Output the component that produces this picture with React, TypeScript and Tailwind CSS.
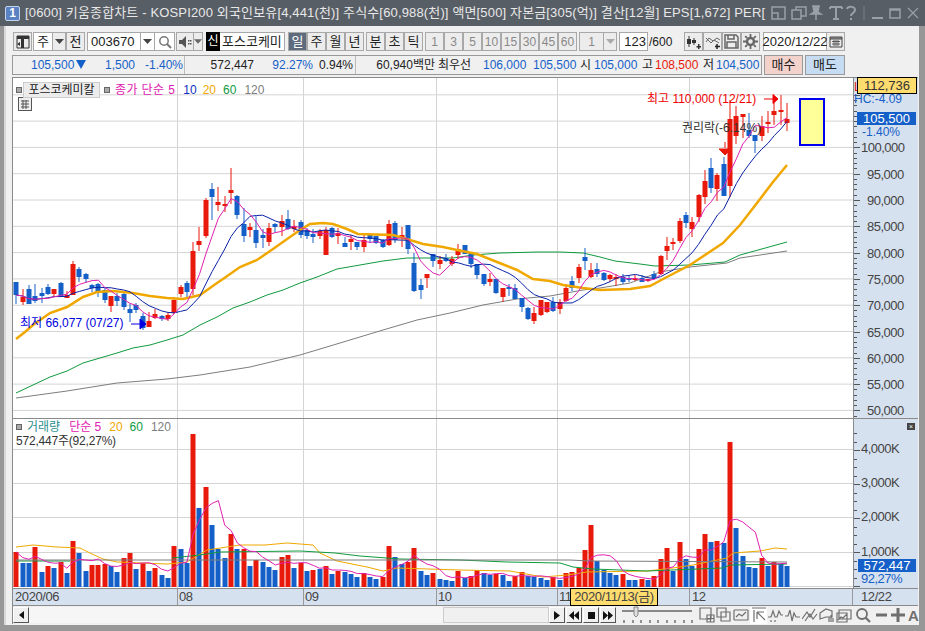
import React from "react"

const FONT = '"Liberation Sans","Noto Sans CJK KR",sans-serif'

// top, bottom, wick top, wick bottom, red
const candles: number[][] = [
  [282,295,282,304,0],[297,302,289,305,1],[289,304,285,304,0],[296,301,284,303,0],[293,296,288,303,0],
  [287,294,284,295,0],[289,294,289,297,1],[283,297,282,297,0],[295,298,291,298,1],[264,295,261,295,1],
  [269,277,267,282,0],[274,279,273,283,0],[285,288,284,292,0],[284,293,283,297,0],[290,300,288,303,0],
  [296,306,296,312,1],[296,301,293,306,0],[294,307,293,310,0],[309,313,304,322,0],[305,310,303,313,0],
  [316,328,313,330,0],[321,327,312,327,1],[314,318,309,319,1],[316,319,315,321,0],[315,319,312,321,1],
  [300,313,297,314,1],[287,294,285,297,1],[283,292,281,297,0],[251,289,242,295,1],[241,245,227,251,1],
  [200,236,198,238,1],[189,197,183,220,0],[202,205,187,211,1],[204,206,196,212,1],[190,193,168,204,1],
  [196,215,195,219,0],[224,236,208,242,0],[227,230,223,237,1],[230,243,216,248,0],[235,238,229,248,0],
  [228,242,223,246,1],[224,227,223,233,0],[221,227,215,236,1],[219,229,210,230,0],[226,229,220,232,1],
  [222,235,220,238,0],[230,236,228,239,0],[234,237,229,243,0],[231,236,229,239,1],[230,255,227,255,1],
  [228,237,227,238,0],[233,236,228,244,1],[243,247,237,247,0],[239,242,235,250,1],[242,247,242,250,0],
  [240,247,234,252,1],[234,239,234,243,0],[236,243,236,244,0],[240,247,239,248,0],[224,245,220,246,1],
  [223,240,221,243,0],[235,238,227,247,1],[225,249,225,254,0],[263,291,253,292,0],[285,290,279,299,0],
  [274,278,274,288,1],[254,261,254,267,0],[260,264,256,269,1],[258,261,254,262,0],[259,264,256,266,1],
  [249,255,244,259,1],[245,254,245,254,0],[253,264,252,268,0],[264,275,264,279,0],[274,284,274,286,0],
  [279,282,273,286,1],[279,293,279,294,0],[288,297,288,302,1],[287,289,284,296,0],[288,299,284,299,0],
  [298,307,298,312,0],[308,319,307,320,0],[313,321,307,324,1],[300,315,300,316,1],[302,312,302,313,1],
  [302,311,297,312,0],[302,309,299,314,1],[288,301,284,302,1],[281,288,276,291,0],[267,278,264,283,1],
  [257,261,248,270,0],[270,277,263,278,1],[269,274,263,277,0],[273,280,272,281,0],[275,279,274,282,1],
  [277,279,274,286,1],[277,282,274,284,0],[278,280,276,282,0],[278,279,275,281,1],[278,282,275,282,0],
  [279,281,279,282,1],[274,278,271,279,0],[256,274,255,275,1],[246,251,237,260,1],[242,244,238,250,1],
  [221,241,218,243,1],[215,223,212,228,0],[222,229,217,237,1],[195,217,194,222,1],[181,197,170,204,1],
  [168,188,158,193,0],[175,189,173,201,1],[164,196,157,196,0],[119,186,100,197,1],[116,136,106,144,1],
  [114,117,114,138,1],[130,136,113,138,0],[135,141,135,153,0],[126,136,116,141,1],[122,124,111,133,1],
  [111,115,99,125,1],[110,112,95,125,1],[119,123,103,131,1],
]

// signed top of the volume bar, red is positive
const volumes = [
  552,-563,-563,547,-572,566,-568,562,-573,541,-553,-571,565,565,564,-566,-572,558,553,-569,
  563,-571,568,-575,-578,546,-549,-563,434,-508,487,-525,-549,-558,534,-549,549,-566,560,-562,
  -567,-570,557,555,-568,563,-571,570,-569,566,-574,571,-572,-574,-577,573,-577,-579,577,546,
  -557,-564,562,548,-571,-575,573,-579,-580,-581,571,-578,576,570,-573,-575,574,-575,-581,576,
  572,-576,-577,-578,-580,577,-580,573,572,568,550,525,-561,-570,-573,-575,574,-580,-580,579,
  -580,576,559,548,-571,542,-559,-566,549,534,-542,541,-543,442,-528,-556,-567,-568,558,-566,
  562,-564,-566,
]

const ma20 = "16,339 25,332 33,325 50,313 67,307 83,297 97,292 113,291 133,293 150,296 167,298 183,299 200,295 217,283 223,279 240,267 257,260 273,249 290,237 300,230 310,224 323,223 333,224 347,229 358,234 393,235 410,240 423,244 443,247 457,250 477,254 497,262 517,270 533,279 550,281 563,285 583,288 600,290 630,289 650,286 665,278 690,265 723,243 740,225 757,203 773,182 787,165"
const ma60 = "16,393 33,385 50,377 67,371 83,363 100,358 117,353 133,348 150,345 167,340 183,335 200,325 217,317 233,308 250,302 267,295 283,290 300,283 317,277 337,269 360,265 383,261 407,258 453,258 473,255 500,253 537,252 560,252 583,253 600,257 615,261 640,264 655,266 690,265 725,262 740,255 787,242"
const ma120 = "16,398 67,391 117,383 167,379 200,375 250,367 300,355 340,343 383,330 417,320 450,313 483,305 517,299 550,296 583,290 600,288 630,283 660,272 690,267 727,263 740,258 787,251"
const volOrange = "16,547 33,545 57,547 80,548 90,553 103,559 117,562 167,564 187,562 207,550 240,545 265,545 287,543 313,545 320,553 337,561 367,567 383,571 397,568 460,570 510,571 543,577 567,575 587,572 647,571 673,568 693,565 727,558 733,553 760,551 775,548 787,549"
const volGreen1 = "16,561 70,561"
const volGreen2 = "172,558 200,555 220,552 300,551 335,553 360,556 400,559 460,560 507,562 560,563 573,567 593,569 647,571 723,568 730,565 787,564"
const volGrey = "16,560 460,560 570,560 590,561 787,562"

const barX = (i: number) => 16.3 + i * 6.317

function smaLine(values: number[], n: number) {
  return values
    .map((_, i) => {
      const from = Math.max(0, i - n + 1)
      const part = values.slice(from, i + 1)
      const avg = part.reduce((a, b) => a + b, 0) / part.length
      return `${barX(i).toFixed(1)},${avg.toFixed(1)}`
    })
    .join(" ")
}

const closes = candles.map((c) => (c[4] ? c[0] : c[1]))
const priceLevels = [110000, 105000, 100000, 95000, 90000, 85000, 80000, 75000, 70000, 65000, 60000, 55000, 50000]
const priceY = (p: number) => 147.4 + (100000 - p) * 0.00526
const gridX = [177.5, 303.5, 436.5, 557.5, 689.5]

function PriceChart() {
  return (
    <svg width={840} height={340} viewBox="13 78 840 340" className="block bg-white shrink-0">
      {priceLevels.map((p) => (
        <line key={p} x1={13} x2={853} y1={priceY(p)} y2={priceY(p)} stroke="#d4d4d4" strokeWidth={1} />
      ))}
      {gridX.map((x) => (
        <line key={x} x1={x} x2={x} y1={78} y2={418} stroke="#d4d4d4" strokeWidth={1} />
      ))}
      <polyline points={ma120} fill="none" stroke="#7d7d7d" strokeWidth={1} />
      <polyline points={ma60} fill="none" stroke="#0f9a3e" strokeWidth={1} />
      {candles.map((c, i) => {
        const x = Math.round(barX(i))
        const color = c[4] ? "#e8190a" : "#1560c8"
        return (
          <g key={i} fill={color}>
            <rect x={x - 0.5} y={c[2]} width={1} height={c[3] - c[2]} />
            <rect x={x - 2.5} y={c[0]} width={5} height={Math.max(2, c[1] - c[0])} />
          </g>
        )
      })}
      <polyline points={ma20} fill="none" stroke="#f0a800" strokeWidth={2.5} />
      <polyline points={smaLine(closes, 10)} fill="none" stroke="#0a22a8" strokeWidth={1} />
      <polyline points={smaLine(closes, 5)} fill="none" stroke="#e020b0" strokeWidth={1} />

      <text x={647} y={103} fontSize={12} fill="#f00000">최고 110,000 (12/21)</text>
      <path d="M764 99h9M773 94.5l5 4.5l-5 4.5z" stroke="#f00000" fill="#f00000" />
      <text x={682} y={132} fontSize={12} fill="#333">권리락(-6.14%)</text>
      <path d="M725 142v6M719 149h12l-6 6z" stroke="#e8190a" fill="#e8190a" />
      <text x={20} y={327} fontSize={12} fill="#0000e0">최저 66,077 (07/27)</text>
      <path d="M131 324h9M140 319l6 5l-6 5z" stroke="#0000e0" fill="#0000e0" />
      <rect x={800} y={99} width={24} height={46} fill="#ffff99" stroke="#0000f0" strokeWidth={2} />

      <rect x={18.5} y={97.5} width={13} height={13} fill="#eee" stroke="#555" />
      <path d="M21 101h8M21 104h8M21 107h8M23 100v9M26 100v9" stroke="#555" strokeWidth={1} />
    </svg>
  )
}

function VolumeChart() {
  return (
    <svg width={840} height={169} viewBox="13 419 840 169" className="block bg-white shrink-0">
      {[449, 483, 517, 552, 586].map((y) => (
        <line key={y} x1={13} x2={853} y1={y + 0.5} y2={y + 0.5} stroke="#d4d4d4" />
      ))}
      {gridX.map((x) => (
        <line key={x} x1={x} x2={x} y1={419} y2={588} stroke="#d4d4d4" />
      ))}
      {volumes.map((v, i) => {
        const top = Math.abs(v)
        return (
          <rect key={i} x={Math.round(barX(i)) - 2.5} y={top} width={5} height={587 - top} fill={v > 0 ? "#e8190a" : "#1560c8"} />
        )
      })}
      <polyline points={volOrange} fill="none" stroke="#f0a800" strokeWidth={1} />
      <polyline points={volGreen1} fill="none" stroke="#0f9a3e" strokeWidth={1} />
      <polyline points={volGreen2} fill="none" stroke="#0f9a3e" strokeWidth={1} />
      <polyline points={volGrey} fill="none" stroke="#7d7d7d" strokeWidth={1} />
      <polyline points={smaLine(volumes.map(Math.abs), 5)} fill="none" stroke="#e020b0" strokeWidth={1} />
    </svg>
  )
}

function PriceAxis() {
  const ticks: number[] = []
  for (let p = 110000; p >= 49000; p -= 1000) ticks.push(p)
  return (
    <div className="relative w-[65px] h-[340px] bg-[#d6e1ef] border-l border-[#8a8a8a] shrink-0">
      <svg width={65} height={340} viewBox="853 78 65 340" className="block">
        {ticks.map((p) => (
          <line key={p} x1={853} x2={p % 5000 === 0 ? 859 : 856} y1={Math.round(priceY(p)) + 0.5} y2={Math.round(priceY(p)) + 0.5} stroke="#555" />
        ))}
        {priceLevels.slice(2).map((p) => (
          <text key={p} x={p === 100000 ? 860 : 866} y={priceY(p) + 5} fontSize={13} letterSpacing={-0.5} fill="#444">
            {p.toLocaleString("en-US")}
          </text>
        ))}
        <text x={853} y={91} fontSize={12} fill="#e8190a">L</text>
        <text x={853} y={103} fontSize={12} fill="#1560c8">HC:-4.09</text>
        <text x={861} y={136} fontSize={12} fill="#1560c8">-1.40%</text>
      </svg>
      <div className="absolute left-[3px] top-[-1px] w-[60px] h-[17px] bg-[#ffdc6e] border border-black text-[13px] leading-[15px] text-center text-[#333]">112,736</div>
      <div className="absolute left-[3px] top-[34px] w-[59px] h-[13px] bg-[#1560c8] text-white text-[13px] leading-[13px] text-center">105,500</div>
    </div>
  )
}

function VolumeAxis() {
  const ticks: number[] = []
  for (let y = 586; y > 425; y -= 8.5) ticks.push(y)
  return (
    <div className="relative w-[65px] h-[169px] bg-[#d6e1ef] border-l border-[#8a8a8a] shrink-0">
      <svg width={65} height={169} viewBox="853 419 65 169" className="block">
        {ticks.map((y, i) => (
          <line key={y} x1={853} x2={i % 4 === 0 ? 859 : 856} y1={Math.round(y) + 0.5} y2={Math.round(y) + 0.5} stroke="#555" />
        ))}
        <text x={860} y={453} fontSize={13} letterSpacing={-0.5} fill="#444">4,000K</text>
        <text x={860} y={487} fontSize={13} letterSpacing={-0.5} fill="#444">3,000K</text>
        <text x={860} y={521} fontSize={13} letterSpacing={-0.5} fill="#444">2,000K</text>
        <text x={860} y={556} fontSize={13} letterSpacing={-0.5} fill="#444">1,000K</text>
        <text x={860} y={583} fontSize={13} letterSpacing={-0.5} fill="#1560c8">92,27%</text>
      </svg>
      <div className="absolute left-[53px] top-[4px] w-[8px] h-[7px] bg-[#444] text-white text-[7px] leading-[7px] text-center">×</div>
      <div className="absolute left-[4px] top-[140px] w-[58px] h-[13px] bg-[#1560c8] text-white text-[13px] leading-[13px] text-center">572,447</div>
    </div>
  )
}

function Btn({ children, className = "" }: { children?: React.ReactNode; className?: string }) {
  return (
    <div className={"flex items-center justify-center h-[19px] border border-[#a8a8a8] bg-[#ececec] text-[13px] text-[#222] shrink-0 " + className}>
      {children}
    </div>
  )
}

function Caret({ color = "#444" }: { color?: string }) {
  return (
    <svg width={9} height={5} viewBox="0 0 9 5">
      <path d="M0 0h9l-4.500 5z" fill={color} />
    </svg>
  )
}

function Gi({ d, w = 16 }: { d: string; w?: number }) {
  return (
    <svg width={w} height={16} viewBox="0 0 16 16" fill="none" stroke="#6f6f6f" strokeWidth={1.2} className="shrink-0">
      <path d={d} />
    </svg>
  )
}

function TitleBar() {
  return (
    <div className="flex items-center h-[26px] bg-[#585e66] shrink-0 pl-[5px] text-[#e8e8e8]">
      <div className="w-[15px] h-[15px] bg-[#5a82c2] border border-[#c5d5ee] rounded-[2px] text-white text-[12px] leading-[13px] font-bold text-center shrink-0">1</div>
      <div className="ml-[5px] w-[746px] text-[13px] tracking-[0.15px] whitespace-nowrap overflow-hidden">
        [0600] 키움종합차트 - KOSPI200 외국인보유[4,441(천)] 주식수[60,988(천)] 액면[500] 자본금[305(억)] 결산[12월] EPS[1,672] PER[
      </div>
      <svg width={150} height={16} viewBox="0 0 150 16" fill="none" stroke="#9aa0a8" strokeWidth={1.5} className="shrink-0">
        <path d="M1 2h13v12H1zM1 8h6v6" />
        <path d="M21 5h9v9H21zM25 5V2h10v9h-5" />
        <path d="M41 1h8M42 1l1 6l-3 2h10l-3-2l1-6M45 9v6" fill="#9aa0a8" />
        <path d="M59 2h12M65 2v12M62 14h6M59 2v2M71 2v2" strokeWidth={2} />
        <path d="M76 4c1-3 8-3 8 1c0 3-4 3-4 6M80 13v2" strokeWidth={2} />
        <path d="M93 1v14" stroke="#7a8088" strokeWidth={1} />
        <path d="M101 13h11" strokeWidth={2} />
        <path d="M119 4h10v9h-10zM119 5h10" />
        <path d="M137 3l10 10M147 3l-10 10" strokeWidth={1.2} />
      </svg>
    </div>
  )
}

function Toolbar() {
  return (
    <div className="flex items-center h-[26px] pt-[5px] pl-[7px] shrink-0">
      <Btn className="w-[19px]">
        <svg width={14} height={14} viewBox="0 0 14 14">
          <path d="M1 1h12v12H1z" fill="none" stroke="#333" />
          <path d="M1 1h12v3H1zM5 4h3v9H5z" fill="#333" />
          <path d="M4 7L1 9l3 2z" fill="#333" />
        </svg>
      </Btn>
      <Btn className="w-[20px] ml-[1px] !bg-white">주</Btn>
      <Btn className="w-[13px] border-l-0"><Caret /></Btn>
      <Btn className="w-[19px]">전</Btn>
      <Btn className="w-[54px] ml-[2px] !bg-white !justify-start pl-[3px] text-[12px]">003670</Btn>
      <Btn className="w-[14px] !bg-white border-l-0"><Caret /></Btn>
      <Btn className="w-[20px] !bg-white border-l-0">
        <svg width={14} height={14} viewBox="0 0 14 14" fill="none" stroke="#777" strokeWidth={1.5}>
          <circle cx={6} cy={6} r={4.2} />
          <path d="M9 9l4 4" strokeWidth={2} />
        </svg>
      </Btn>
      <Btn className="w-[18px] ml-[1px]">
        <svg width={14} height={14} viewBox="0 0 14 14" fill="#555">
          <path d="M1 5h3l4-4v12l-4-4H1zM10 5h1.500v1.500H10zM12 5h1.500v1.500H12zM10 8h1.500v1.500H10zM12 8h1.500v1.500H12z" />
        </svg>
      </Btn>
      <Btn className="w-[9px] border-l-0"><Caret color="#666" /></Btn>
      <div className="ml-[3px] w-[14px] h-[19px] bg-black text-white text-[12px] leading-[19px] text-center shrink-0">신</div>
      <Btn className="w-[65px] !bg-white !justify-start pl-[2px] border-l-0 text-[13px] whitespace-nowrap overflow-hidden">포스코케미</Btn>
      <Btn className="w-[19px] ml-[3px] !bg-[#5d6b7c] !text-white">일</Btn>
      {["주", "월", "년"].map((t) => (
        <Btn key={t} className="w-[19px]">{t}</Btn>
      ))}
      <div className="w-[2px] shrink-0" />
      {["분", "초", "틱"].map((t) => (
        <Btn key={t} className="w-[19px]">{t}</Btn>
      ))}
      <div className="w-[2px] shrink-0" />
      {["1", "3", "5", "10", "15", "30", "45", "60"].map((t) => (
        <Btn key={t} className="w-[19px] !text-[12px] !text-[#888]">{t}</Btn>
      ))}
      <Btn className="w-[25px] ml-[2px] !text-[12px] !text-[#888]">1</Btn>
      <Btn className="w-[13px] border-l-0"><Caret color="#aaa" /></Btn>
      <Btn className="w-[29px] ml-[2px] !bg-white !justify-end pr-[1px] text-[12px]">123</Btn>
      <div className="w-[35px] ml-[1px] text-[12px] text-[#222] shrink-0">/600</div>
      <Btn className="w-[19px]">
        <svg width={16} height={14} viewBox="0 0 16 14" fill="#333">
          <path d="M3 1v11M8 3v7" stroke="#333" />
          <path d="M1 4h4v5H1zM6 5h4v3H6zM12 9h1.500v5H12zM10.500 11h4.500v1.500h-4.500z" />
        </svg>
      </Btn>
      <Btn className="w-[19px]">
        <svg width={16} height={14} viewBox="0 0 16 14" fill="none" stroke="#666">
          <path d="M1 7l3-4l4 3l4-3l3 2M1 3l5 5l3-3l5 3" />
          <path d="M12 9v5M10 11.500h5" stroke="#222" strokeWidth={1.500} />
        </svg>
      </Btn>
      <Btn className="w-[19px]">
        <svg width={15} height={15} viewBox="0 0 15 15" fill="none" stroke="#666" strokeWidth={1.500}>
          <path d="M1 1h11l2 2v11H1zM4 1v4h6V1M3 14V8h9v6" />
        </svg>
      </Btn>
      <Btn className="w-[19px]">
        <svg width={15} height={15} viewBox="0 0 15 15" fill="none" stroke="#666" strokeWidth={2.500}>
          <circle cx={7.500} cy={7.500} r={3.500} />
          <path d="M7.500 0v3M7.500 12v3M0 7.500h3M12 7.500h3M2.200 2.200l2 2M10.800 10.800l2 2M2.200 12.800l2-2M10.800 4.200l2-2" strokeWidth={1.800} />
        </svg>
      </Btn>
      <Btn className="w-[64px] ml-[3px] !bg-white text-[12px]">2020/12/22</Btn>
      <Btn className="w-[18px] border-l-0">
        <svg width={14} height={12} viewBox="0 0 14 12" fill="none" stroke="#444">
          <path d="M1 1h12v10H1z" />
          <path d="M1 2h12M1 3h12" />
          <path d="M3 5.500h8M3 8h8M5 4v6M7 4v6M9 4v6" strokeWidth={0.800} />
        </svg>
      </Btn>
    </div>
  )
}

function InfoRow() {
  return (
    <div className="flex items-center h-[25px] pl-[6px] shrink-0 text-[12px] whitespace-nowrap">
      <div className="flex items-center h-[20px] w-[750px] border border-[#999] bg-[#f0f0f0] shrink-0">
        <div className="w-[172px] h-full border-r border-[#bbb] flex items-center text-[#1560c8] shrink-0">
          <span className="ml-[18px] w-[42px] text-right">105,500</span>
          <svg width={10} height={9} viewBox="0 0 10 9" className="ml-[3px] mr-[5px]"><path d="M0 0h10L5 9z" fill="#1560c8" /></svg>
          <span className="w-[44px] text-right">1,500</span>
          <span className="w-[48px] text-right">-1.40%</span>
        </div>
        <div className="w-[171px] h-full border-r border-[#bbb] flex items-center shrink-0">
          <span className="w-[69px] text-right text-[#222]">572,447</span>
          <span className="w-[59px] text-right text-[#1560c8]">92.27%</span>
          <span className="w-[40px] text-right text-[#222]">0.94%</span>
        </div>
        <span className="w-[79px] text-right text-[#222] shrink-0">60,940백만</span>
        <span className="w-[45px] ml-[3px] text-[#222] shrink-0">최우선</span>
        <span className="w-[50px] text-[#1560c8] shrink-0">106,000</span>
        <span className="w-[44px] text-[#1560c8] shrink-0">105,500</span>
        <span className="w-[17px] text-center text-[#222] shrink-0">시</span>
        <span className="w-[46px] text-[#1560c8] shrink-0">105,000</span>
        <span className="w-[15px] text-center text-[#222] shrink-0">고</span>
        <span className="w-[46px] text-[#e8190a] shrink-0">108,500</span>
        <span className="w-[15px] text-center text-[#222] shrink-0">저</span>
        <span className="text-[#1560c8] shrink-0">104,500</span>
      </div>
      <div className="ml-[2px] w-[39px] h-[20px] bg-[#f4d2cc] border border-[#999] text-[13px] leading-[18px] text-center text-[#222] shrink-0">매수</div>
      <div className="ml-[2px] w-[40px] h-[20px] bg-[#c5dcf2] border border-[#999] text-[13px] leading-[18px] text-center text-[#222] shrink-0">매도</div>
    </div>
  )
}

function TimeAxis() {
  return (
    <div className="relative h-[18px] bg-[#d6e1ef] border-y border-[#8a8a8a] text-[13px] tracking-[-0.4px] leading-[16px] text-[#444] shrink-0">
      <span className="absolute left-[2px]">2020/06</span>
      <span className="absolute left-[164px] pl-[1px] h-full border-l border-[#999]">08</span>
      <span className="absolute left-[290px] pl-[1px] h-full border-l border-[#999]">09</span>
      <span className="absolute left-[423px] pl-[1px] h-full border-l border-[#999]">10</span>
      <span className="absolute left-[544px] pl-[1px] h-full border-l border-[#999]">11</span>
      <span className="absolute left-[557px] top-[-1px] w-[88px] h-[18px] bg-[#ffdc6e] border border-black text-center">2020/11/13(금)</span>
      <span className="absolute left-[676px] pl-[2px] h-full border-l border-[#999]">12</span>
      <span className="absolute left-[839px] pl-[8px] h-full border-l border-[#999]">12/22</span>
    </div>
  )
}

function ScrollRow() {
  const small = "flex items-center justify-center w-[16px] h-[16px] bg-[#f0f0f0] border border-[#fff] border-b-[#555] border-r-[#555] shrink-0"
  return (
    <div className="flex items-center h-[18px] shrink-0">
      <div className={small}>
        <svg width={5} height={8} viewBox="0 0 5 8"><path d="M5 0v8L0 4z" fill="#111" /></svg>
      </div>
      <div className="w-[414px] h-[16px] bg-[#f6f6f6] shrink-0" />
      <div className="w-[106px] h-[16px] bg-[#f0f0f0] border border-[#ccc] shrink-0" />
      <div className={small}>
        <svg width={6} height={9} viewBox="0 0 6 9"><path d="M0 0l6 4.500L0 9z" fill="#111" /></svg>
      </div>
      <div className={small + " ml-[1px]"}>
        <svg width={10} height={9} viewBox="0 0 10 9"><path d="M5 0v9L0 4.500zM10 0v9L5 4.500z" fill="#111" /></svg>
      </div>
      <div className={small + " ml-[1px]"}>
        <div className="w-[7px] h-[7px] bg-[#111]" />
      </div>
      <div className={small + " ml-[1px]"}>
        <svg width={10} height={9} viewBox="0 0 10 9"><path d="M0 0l5 4.500L0 9zM5 0l5 4.500L5 9z" fill="#111" /></svg>
      </div>
      <svg width={76} height={18} viewBox="0 0 76 18" className="ml-[4px] shrink-0">
        <path d="M2 5h70" stroke="#888" strokeWidth={2} />
        <path d="M14 1h4v8l-2 2l-2-2z" fill="#ddd" stroke="#888" />
        <path d="M4 14v3M13 14v3M21 14v3M30 14v3M38 14v3M47 14v3M55 14v3M64 14v3M72 14v3" stroke="#333" />
      </svg>
      <div className="flex items-center gap-[1px] ml-[3px]">
        <Gi d="M1 1h11v11H1zM8 8h7v7H8zM11.500 8v7M8 11.500h7" />
        <Gi d="M1 1h9v9H1zM5 5h9v9H5z" />
        <Gi d="M1 3h14M1 13h14M1 3v10M15 3v10M3 10l3-3l3 2l4-4" />
        <div className="flex items-center justify-center w-[17px] h-[17px] bg-white shrink-0">
          <Gi d="M1 1h14M3 3v12M6 5h7M6 5v7M6 5l8 8" />
        </div>
        <Gi d="M0 10h3l2-6l2 6h2l2-6l2 4h2M3 13v2M7 13v2" />
        <Gi d="M0 9h3l2-6l2 11l2-8l2 4h4" />
        <Gi d="M0 12l5-7l3 5l5-8M3 14l5-7l3 5l4-5" />
        <Gi d="M1 6l6-4l6 2v6H7L1 12zM10 10v5M12 8v7M14 11v4" />
        <Gi d="M3 3h12v9H3zM1 6h10v9H1zM2 13l3-3l2 1l4-4" />
        <svg width={16} height={16} viewBox="0 0 16 16" fill="none" stroke="#6f6f6f" strokeWidth={1.800} className="shrink-0 ml-[2px]">
          <circle cx={7} cy={7} r={5} />
          <path d="M10.500 10.500L15 15" strokeWidth={2.200} />
        </svg>
        <svg width={14} height={14} viewBox="0 0 14 14" stroke="#6f6f6f" strokeWidth={3} className="shrink-0 ml-[2px]">
          <path d="M2 7h11" />
        </svg>
        <svg width={14} height={14} viewBox="0 0 14 14" stroke="#6f6f6f" strokeWidth={3} className="shrink-0 ml-[2px]">
          <path d="M0 7h14M7 0v14" />
        </svg>
        <span className="ml-[2px] text-[15px] font-bold text-[#6f6f6f] leading-none">A</span>
      </div>
    </div>
  )
}

export default function App() {
  return (
    <div className="w-[925px] h-[631px] flex flex-col overflow-hidden bg-[#f0f0f0]" style={{ fontFamily: FONT }}>
      <TitleBar />
      <div className="flex flex-1 min-h-0">
        <div className="w-[6px] bg-[#979797] border-r-2 border-[#d8d8d8] shrink-0" />
        <div className="flex-1 min-w-0">
          <Toolbar />
          <InfoRow />
          <div className="ml-[6px] w-[906px] border-l border-[#8a8a8a] border-t">
            <div className="relative flex">
              <PriceChart />
              <PriceAxis />
              <div className="absolute left-[3px] top-[4px] flex items-center text-[12px] leading-none whitespace-nowrap">
                <span className="w-[6px] h-[6px] bg-[#aaa] border border-[#666]" />
                <span className="ml-[1px] w-[77px] h-[16px] bg-[#ececec] border border-[#ccc] text-center leading-[14px] text-[#222]">포스코케미칼</span>
                <span className="ml-[4px] w-[6px] h-[6px] bg-[#aaa] border border-[#666]" />
                <span className="ml-[5px] tracking-[0.4px] text-[#e020b0]">종가 단순 5</span>
                <span className="ml-[8px] text-[#1030c0]">10</span>
                <span className="ml-[6px] text-[#f0a800]">20</span>
                <span className="ml-[7px] text-[#0f9a3e]">60</span>
                <span className="ml-[8px] text-[#7d7d7d]">120</span>
              </div>
            </div>
            <div className="relative flex border-t border-[#8a8a8a]">
              <VolumeChart />
              <VolumeAxis />
              <div className="absolute left-[3px] top-[1px] text-[12px] whitespace-nowrap">
                <div className="flex items-center h-[14px]">
                  <span className="w-[6px] h-[6px] bg-[#aaa] border border-[#666]" />
                  <span className="ml-[5px] text-[#2a9090]">거래량</span>
                  <span className="ml-[9px] text-[#e020b0]">단순 5</span>
                  <span className="ml-[8px] text-[#f0a800]">20</span>
                  <span className="ml-[7px] text-[#0f9a3e]">60</span>
                  <span className="ml-[8px] text-[#7d7d7d]">120</span>
                </div>
                <div className="text-[#333] leading-[15px] tracking-[-0.2px]">572,447주(92,27%)</div>
              </div>
            </div>
            <TimeAxis />
            <ScrollRow />
          </div>
        </div>
        <div className="w-[6px] bg-[#979797] shrink-0" />
      </div>
      <div className="h-[6px] bg-[#979797] shrink-0" />
    </div>
  )
}
